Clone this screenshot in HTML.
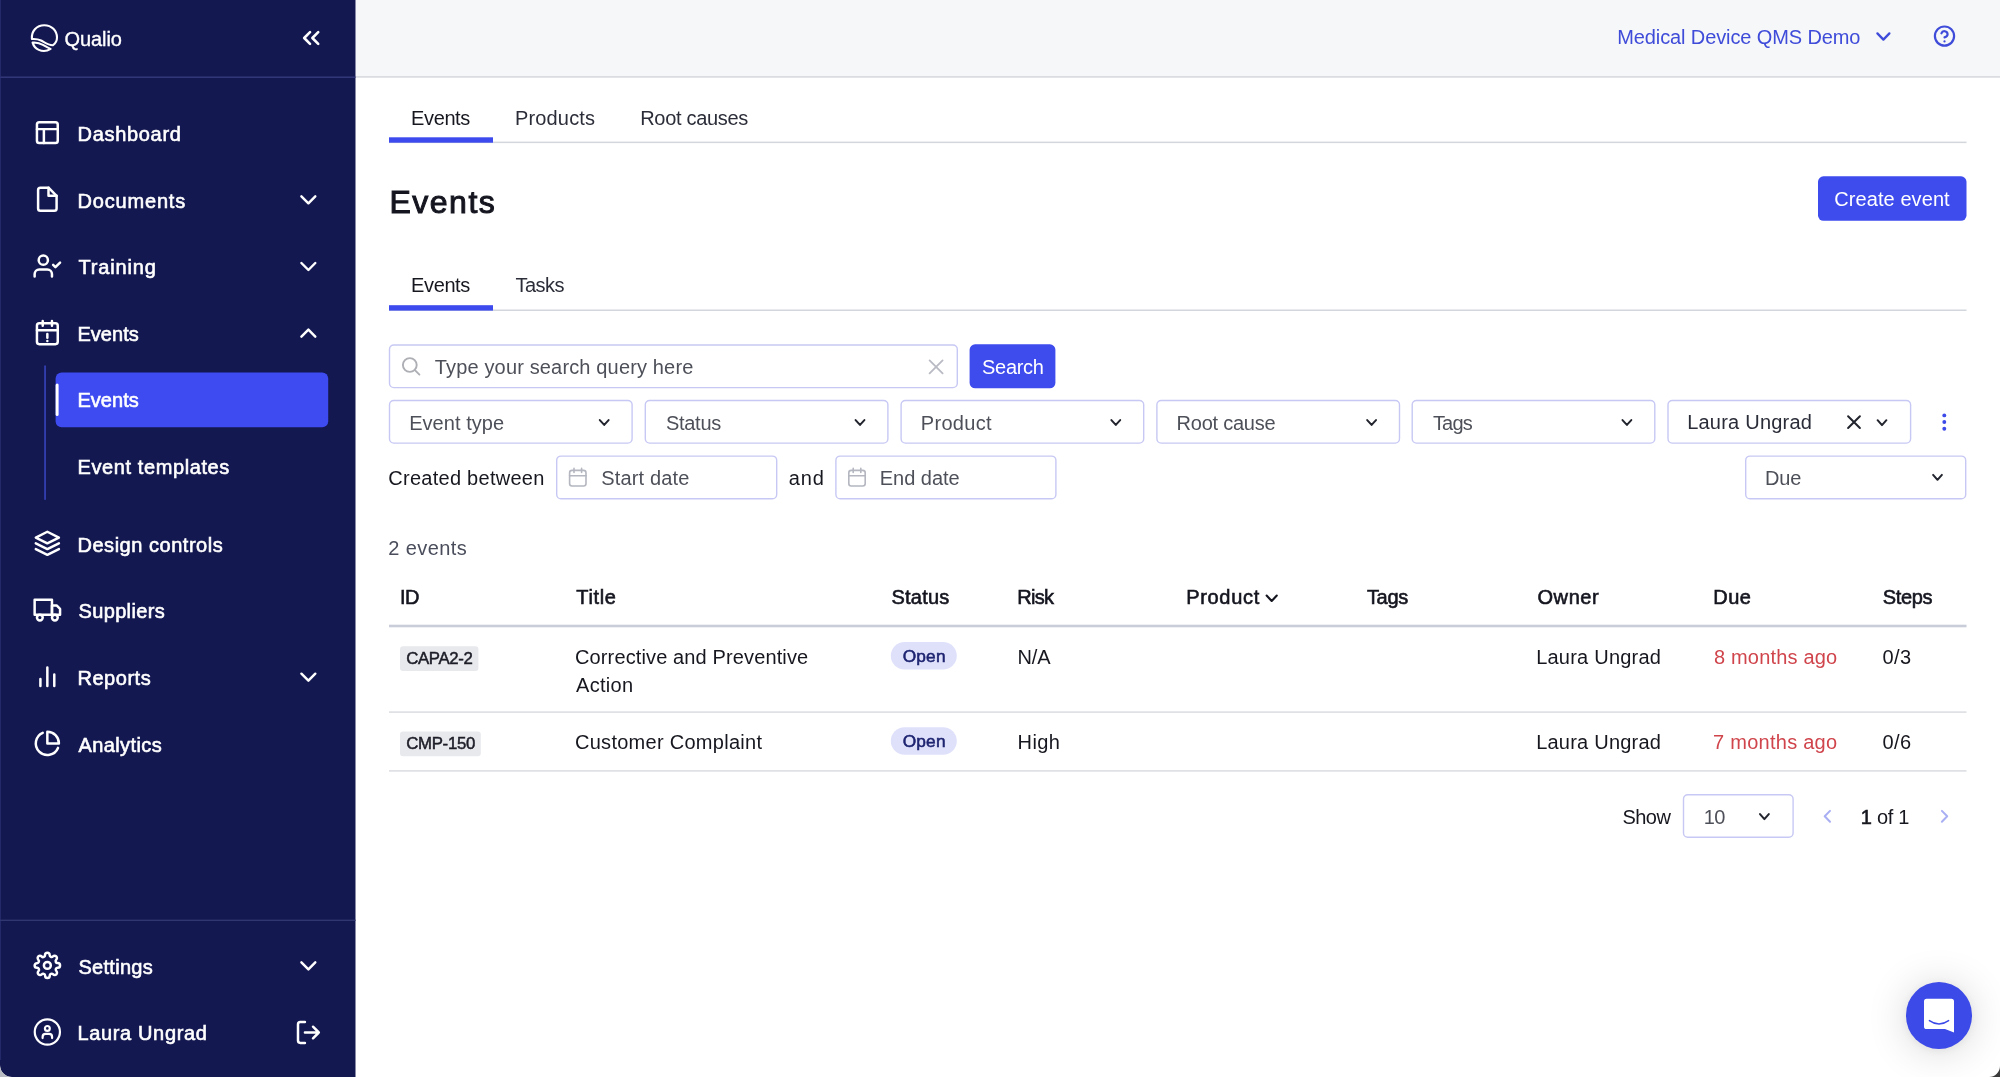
<!DOCTYPE html>
<html lang="en"><head><meta charset="utf-8"><title>Events - Qualio</title>
<style>
html,body{margin:0;padding:0}
body{width:2000px;height:1077px;overflow:hidden;position:relative;background:#fff;font-family:"Liberation Sans",sans-serif;-webkit-font-smoothing:antialiased}
.t{position:absolute;white-space:nowrap;line-height:1;margin:0;padding:0}
.tx{position:absolute;left:0;top:0;width:2000px;height:1077px;will-change:transform}
.b{position:absolute;box-sizing:border-box}
svg.ov{position:absolute;left:0;top:0;pointer-events:none}
</style></head><body>
<svg class="ov" width="2000" height="1077" viewBox="0 0 2000 1077">
<rect x="355.50" y="0.00" width="1644.50" height="77.40" fill="#f6f7f9"/>
<rect x="355.50" y="76.20" width="1644.50" height="1.40" fill="#d3d5db"/>
<path d="M0 0H355.5V1077H12A12 12 0 0 1 0 1065Z" fill="#141850"/>
<rect x="0.00" y="76.50" width="355.50" height="1.40" fill="#343a7c"/>
<rect x="0.00" y="0.00" width="0.70" height="1060.00" fill="#2c3274"/>
<rect x="0.00" y="919.60" width="355.50" height="1.40" fill="#30366f"/>
<rect x="55.60" y="372.40" width="272.60" height="54.80" rx="6" fill="#3d4bf1"/>
<rect x="55.60" y="383.50" width="3.00" height="32.50" rx="1.5" fill="#fff"/>
<rect x="44.30" y="365.50" width="1.50" height="134.30" fill="#3a47c4"/>
<rect x="389.00" y="141.60" width="1577.50" height="1.50" fill="#d4d6dd"/>
<rect x="389.00" y="137.30" width="104.00" height="5.40" fill="#3d4aed"/>
<rect x="389.00" y="309.50" width="1577.50" height="1.50" fill="#d4d6dd"/>
<rect x="389.00" y="305.20" width="104.00" height="5.40" fill="#3d4aed"/>
<rect x="1818.00" y="176.30" width="148.50" height="44.50" rx="5.5" fill="#3e4cee"/>
<rect x="389.50" y="345.00" width="567.80" height="42.60" rx="4.30" fill="#fff" stroke="#c7c8f4" stroke-width="1.4"/>
<rect x="969.60" y="344.30" width="85.80" height="44.00" rx="5.5" fill="#3e4cee"/>
<rect x="389.50" y="400.50" width="242.60" height="42.60" rx="4.30" fill="#fff" stroke="#c7c8f4" stroke-width="1.4"/>
<rect x="645.30" y="400.50" width="242.60" height="42.60" rx="4.30" fill="#fff" stroke="#c7c8f4" stroke-width="1.4"/>
<rect x="901.10" y="400.50" width="242.60" height="42.60" rx="4.30" fill="#fff" stroke="#c7c8f4" stroke-width="1.4"/>
<rect x="1156.90" y="400.50" width="242.60" height="42.60" rx="4.30" fill="#fff" stroke="#c7c8f4" stroke-width="1.4"/>
<rect x="1412.20" y="400.50" width="242.60" height="42.60" rx="4.30" fill="#fff" stroke="#c7c8f4" stroke-width="1.4"/>
<rect x="1668.00" y="400.50" width="242.60" height="42.60" rx="4.30" fill="#fff" stroke="#c7c8f4" stroke-width="1.4"/>
<rect x="556.70" y="456.10" width="220.00" height="42.60" rx="4.30" fill="#fff" stroke="#c7c8f4" stroke-width="1.4"/>
<rect x="835.90" y="456.10" width="220.00" height="42.60" rx="4.30" fill="#fff" stroke="#c7c8f4" stroke-width="1.4"/>
<rect x="1745.70" y="456.10" width="220.00" height="42.60" rx="4.30" fill="#fff" stroke="#c7c8f4" stroke-width="1.4"/>
<rect x="389.00" y="624.70" width="1577.50" height="2.60" fill="#c9ccd9"/>
<rect x="389.00" y="711.40" width="1577.50" height="1.40" fill="#d8dadf"/>
<rect x="389.00" y="770.20" width="1577.50" height="1.40" fill="#d8dadf"/>
<rect x="400.00" y="646.20" width="78.40" height="24.70" rx="3" fill="#e8e9ed"/>
<rect x="400.00" y="731.50" width="80.80" height="24.70" rx="3" fill="#e8e9ed"/>
<rect x="890.80" y="642.00" width="66.00" height="27.60" rx="13.8" fill="#dfe1fb"/>
<rect x="890.80" y="727.20" width="66.00" height="27.60" rx="13.8" fill="#dfe1fb"/>
<rect x="1683.50" y="794.70" width="109.60" height="42.60" rx="4.30" fill="#fff" stroke="#c7c8f4" stroke-width="1.4"/>
</svg>
<div class="b" style="left:1905.8px;top:982.3px;width:66.6px;height:66.6px;background:#3c4ae8;border-radius:50%;box-shadow:0 1.3px 8px rgba(0,0,0,.06),0 2.7px 42px rgba(0,0,0,.16)"></div>
<div class="tx">
<span class="t" style="left:64.58px;top:28.67px;font-size:20px;-webkit-text-stroke:0.35px #fff;color:#fff;letter-spacing:-0.088px;">Qualio</span>
<span class="t" style="left:77.50px;top:123.87px;font-size:20px;-webkit-text-stroke:0.6px #fff;color:#fff;letter-spacing:0.698px;">Dashboard</span>
<span class="t" style="left:77.50px;top:190.57px;font-size:20px;-webkit-text-stroke:0.6px #fff;color:#fff;letter-spacing:0.818px;">Documents</span>
<span class="t" style="left:78.50px;top:257.27px;font-size:20px;-webkit-text-stroke:0.6px #fff;color:#fff;letter-spacing:0.830px;">Training</span>
<span class="t" style="left:77.50px;top:323.87px;font-size:20px;-webkit-text-stroke:0.6px #fff;color:#fff;letter-spacing:0.011px;">Events</span>
<span class="t" style="left:77.50px;top:390.37px;font-size:20px;-webkit-text-stroke:0.6px #fff;color:#fff;letter-spacing:0.011px;">Events</span>
<span class="t" style="left:77.50px;top:457.27px;font-size:20px;-webkit-text-stroke:0.6px #fff;color:#fff;letter-spacing:0.599px;">Event templates</span>
<span class="t" style="left:77.50px;top:534.57px;font-size:20px;-webkit-text-stroke:0.6px #fff;color:#fff;letter-spacing:0.526px;">Design controls</span>
<span class="t" style="left:78.50px;top:601.37px;font-size:20px;-webkit-text-stroke:0.6px #fff;color:#fff;letter-spacing:0.353px;">Suppliers</span>
<span class="t" style="left:77.50px;top:667.97px;font-size:20px;-webkit-text-stroke:0.6px #fff;color:#fff;letter-spacing:0.528px;">Reports</span>
<span class="t" style="left:78.50px;top:734.67px;font-size:20px;-webkit-text-stroke:0.6px #fff;color:#fff;letter-spacing:0.396px;">Analytics</span>
<span class="t" style="left:78.50px;top:956.67px;font-size:20px;-webkit-text-stroke:0.6px #fff;color:#fff;letter-spacing:0.276px;">Settings</span>
<span class="t" style="left:77.50px;top:1023.37px;font-size:20px;-webkit-text-stroke:0.6px #fff;color:#fff;letter-spacing:0.638px;">Laura Ungrad</span>
<span class="t" style="left:1617.30px;top:27.07px;font-size:20px;color:#3f4cd9;letter-spacing:-0.114px;">Medical Device QMS Demo</span>
<span class="t" style="left:411.10px;top:107.67px;font-size:20px;color:#16171f;letter-spacing:-0.389px;">Events</span>
<span class="t" style="left:515.00px;top:107.67px;font-size:20px;color:#2b2d38;letter-spacing:0.153px;">Products</span>
<span class="t" style="left:640.20px;top:107.67px;font-size:20px;color:#2b2d38;letter-spacing:-0.307px;">Root causes</span>
<span class="t" style="left:389.50px;top:186.31px;font-size:32px;-webkit-text-stroke:1.0px #14151f;color:#14151f;letter-spacing:1.494px;">Events</span>
<span class="t" style="left:1834.30px;top:189.07px;font-size:20px;color:#fff;letter-spacing:0.077px;">Create event</span>
<span class="t" style="left:411.10px;top:275.27px;font-size:20px;color:#16171f;letter-spacing:-0.389px;">Events</span>
<span class="t" style="left:515.40px;top:275.27px;font-size:20px;color:#2b2d38;letter-spacing:-0.506px;">Tasks</span>
<span class="t" style="left:434.80px;top:356.97px;font-size:20px;color:#4e5059;letter-spacing:0.152px;">Type your search query here</span>
<span class="t" style="left:982.00px;top:356.77px;font-size:20px;color:#fff;letter-spacing:-0.289px;">Search</span>
<span class="t" style="left:409.20px;top:412.57px;font-size:20px;color:#4e5059;letter-spacing:0.047px;">Event type</span>
<span class="t" style="left:666.00px;top:412.57px;font-size:20px;color:#4e5059;letter-spacing:-0.300px;">Status</span>
<span class="t" style="left:920.80px;top:412.57px;font-size:20px;color:#4e5059;letter-spacing:0.305px;">Product</span>
<span class="t" style="left:1176.60px;top:412.57px;font-size:20px;color:#4e5059;letter-spacing:-0.250px;">Root cause</span>
<span class="t" style="left:1432.90px;top:412.57px;font-size:20px;color:#4e5059;letter-spacing:-0.782px;">Tags</span>
<span class="t" style="left:1687.20px;top:412.47px;font-size:20px;color:#2a2c38;letter-spacing:0.220px;">Laura Ungrad</span>
<span class="t" style="left:388.30px;top:467.67px;font-size:20px;color:#16171f;letter-spacing:0.264px;">Created between</span>
<span class="t" style="left:601.20px;top:467.67px;font-size:20px;color:#4e5059;letter-spacing:0.156px;">Start date</span>
<span class="t" style="left:788.80px;top:467.67px;font-size:20px;color:#16171f;letter-spacing:0.877px;">and</span>
<span class="t" style="left:879.80px;top:467.67px;font-size:20px;color:#4e5059;letter-spacing:-0.021px;">End date</span>
<span class="t" style="left:1765.00px;top:467.67px;font-size:20px;color:#4e5059;letter-spacing:-0.133px;">Due</span>
<span class="t" style="left:388.30px;top:538.27px;font-size:20px;color:#4a4d5b;letter-spacing:0.414px;">2 events</span>
<span class="t" style="left:400.10px;top:587.07px;font-size:20px;-webkit-text-stroke:0.6px #14151f;color:#14151f;letter-spacing:-0.757px;">ID</span>
<span class="t" style="left:576.30px;top:587.07px;font-size:20px;-webkit-text-stroke:0.6px #14151f;color:#14151f;letter-spacing:0.621px;">Title</span>
<span class="t" style="left:891.50px;top:587.07px;font-size:20px;-webkit-text-stroke:0.6px #14151f;color:#14151f;letter-spacing:0.220px;">Status</span>
<span class="t" style="left:1017.30px;top:587.07px;font-size:20px;-webkit-text-stroke:0.6px #14151f;color:#14151f;letter-spacing:-0.762px;">Risk</span>
<span class="t" style="left:1186.20px;top:587.07px;font-size:20px;-webkit-text-stroke:0.6px #14151f;color:#14151f;letter-spacing:0.688px;">Product</span>
<span class="t" style="left:1366.90px;top:587.07px;font-size:20px;-webkit-text-stroke:0.6px #14151f;color:#14151f;letter-spacing:-0.282px;">Tags</span>
<span class="t" style="left:1537.50px;top:587.07px;font-size:20px;-webkit-text-stroke:0.6px #14151f;color:#14151f;letter-spacing:0.563px;">Owner</span>
<span class="t" style="left:1713.30px;top:587.07px;font-size:20px;-webkit-text-stroke:0.6px #14151f;color:#14151f;letter-spacing:0.417px;">Due</span>
<span class="t" style="left:1882.70px;top:587.07px;font-size:20px;-webkit-text-stroke:0.6px #14151f;color:#14151f;letter-spacing:-0.336px;">Steps</span>
<span class="t" style="left:406.25px;top:651.18px;font-size:16.8px;-webkit-text-stroke:0.5px #1c1d27;color:#1c1d27;letter-spacing:-0.345px;">CAPA2-2</span>
<span class="t" style="left:575.00px;top:646.97px;font-size:20px;color:#16171f;letter-spacing:0.126px;">Corrective and Preventive</span>
<span class="t" style="left:576.00px;top:674.87px;font-size:20px;color:#16171f;letter-spacing:0.307px;">Action</span>
<span class="t" style="left:902.67px;top:647.76px;font-size:17.3px;-webkit-text-stroke:0.55px #1e2470;color:#1e2470;letter-spacing:0.195px;">Open</span>
<span class="t" style="left:1017.60px;top:646.97px;font-size:20px;color:#16171f;letter-spacing:-0.200px;">N/A</span>
<span class="t" style="left:1536.20px;top:646.97px;font-size:20px;color:#16171f;letter-spacing:0.220px;">Laura Ungrad</span>
<span class="t" style="left:1714.00px;top:646.97px;font-size:20px;color:#d0454c;letter-spacing:0.176px;">8 months ago</span>
<span class="t" style="left:1882.40px;top:646.97px;font-size:20px;color:#16171f;letter-spacing:0.460px;">0/3</span>
<span class="t" style="left:406.25px;top:736.48px;font-size:16.8px;-webkit-text-stroke:0.5px #1c1d27;color:#1c1d27;letter-spacing:-0.307px;">CMP-150</span>
<span class="t" style="left:575.00px;top:732.37px;font-size:20px;color:#16171f;letter-spacing:0.275px;">Customer Complaint</span>
<span class="t" style="left:902.67px;top:733.16px;font-size:17.3px;-webkit-text-stroke:0.55px #1e2470;color:#1e2470;letter-spacing:0.195px;">Open</span>
<span class="t" style="left:1017.60px;top:732.37px;font-size:20px;color:#16171f;letter-spacing:0.397px;">High</span>
<span class="t" style="left:1536.20px;top:732.37px;font-size:20px;color:#16171f;letter-spacing:0.220px;">Laura Ungrad</span>
<span class="t" style="left:1713.00px;top:732.37px;font-size:20px;color:#d0454c;letter-spacing:0.267px;">7 months ago</span>
<span class="t" style="left:1882.40px;top:732.37px;font-size:20px;color:#16171f;letter-spacing:0.460px;">0/6</span>
<span class="t" style="left:1622.40px;top:807.07px;font-size:20px;color:#16171f;letter-spacing:-0.495px;">Show</span>
<span class="t" style="left:1703.70px;top:807.07px;font-size:20px;color:#4e5059;letter-spacing:-0.523px;">10</span>
<span class="t" style="left:1860.70px;top:807.07px;font-size:20px;-webkit-text-stroke:0.6px #16171f;color:#16171f;">1</span>
<span class="t" style="left:1877.00px;top:807.07px;font-size:20px;color:#16171f;letter-spacing:-0.312px;">of 1</span>
</div>
<svg class="ov" width="2000" height="1077" viewBox="0 0 2000 1077">
<g fill="none" stroke="#fff" stroke-width="2.1" stroke-linecap="round" stroke-linejoin="round"><path d="M31.9 39C31.2 31.3 36.4 25.2 44.3 25.2C51.7 25.2 57 30.8 57 37.6C57 40.6 55.6 43.4 53 45.2C49 45.6 45 42.6 41 40.5C38 39 34.8 38.8 31.9 39Z"/><path d="M32.6 42.6C36 42.3 40 43.2 43.5 45.2C46 46.6 48.5 48.2 50.6 48.9C47.5 50.9 42.5 51.5 38.8 49.9C35.7 48.5 33.5 45.8 32.6 42.6Z"/></g>
<g transform="translate(33.48 118.73) scale(1.1556)" fill="none" stroke="#fff" stroke-width="2.15" stroke-linecap="round" stroke-linejoin="round"><rect x="3" y="3" width="18" height="18" rx="2"/><path d="M3 9H21M9 21V9"/></g>
<g transform="translate(33.48 185.43) scale(1.1556)" fill="none" stroke="#fff" stroke-width="2.15" stroke-linecap="round" stroke-linejoin="round"><path d="M13 2H6a2 2 0 0 0-2 2v16a2 2 0 0 0 2 2h12a2 2 0 0 0 2-2V9z"/><path d="M13 2V9H20"/></g>
<g transform="translate(33.48 252.13) scale(1.1556)" fill="none" stroke="#fff" stroke-width="2.15" stroke-linecap="round" stroke-linejoin="round"><path d="M16 21v-2a4 4 0 0 0-4-4H5a4 4 0 0 0-4 4v2"/><circle cx="8.5" cy="7" r="4"/><path d="M17 11l2 2l4-4"/></g>
<g transform="translate(33.48 318.73) scale(1.1556)" fill="none" stroke="#fff" stroke-width="2.15" stroke-linecap="round" stroke-linejoin="round"><rect x="3" y="4" width="18" height="18" rx="2"/><path d="M16 2V6M8 2V6M3 10H21M12 13.2V16.4M12 19.2V19.3"/></g>
<g transform="translate(33.48 529.43) scale(1.1556)" fill="none" stroke="#fff" stroke-width="2.15" stroke-linecap="round" stroke-linejoin="round"><path d="M12 2L2 7L12 12L22 7Z"/><path d="M2 17L12 22L22 17"/><path d="M2 12L12 17L22 12"/></g>
<g transform="translate(33.48 596.23) scale(1.1556)" fill="none" stroke="#fff" stroke-width="2.15" stroke-linecap="round" stroke-linejoin="round"><rect x="1" y="3" width="15" height="13"/><path d="M16 8H20L23 11V16H16Z"/><circle cx="5.5" cy="18.5" r="2.5"/><circle cx="18.5" cy="18.5" r="2.5"/></g>
<g transform="translate(33.48 662.83) scale(1.1556)" fill="none" stroke="#fff" stroke-width="2.15" stroke-linecap="round" stroke-linejoin="round"><path d="M18 20V10M12 20V4M6 20V14"/></g>
<g transform="translate(33.48 729.53) scale(1.1556)" fill="none" stroke="#fff" stroke-width="2.15" stroke-linecap="round" stroke-linejoin="round"><path d="M21.21 15.89A10 10 0 1 1 8 2.83"/><path d="M22 12A10 10 0 0 0 12 2v10z"/></g>
<g transform="translate(33.48 951.53) scale(1.1556)" fill="none" stroke="#fff" stroke-width="2.15" stroke-linecap="round" stroke-linejoin="round"><circle cx="12" cy="12" r="3"/><path d="M19.4 15a1.65 1.65 0 0 0 .33 1.82l.06.06a2 2 0 0 1 0 2.83 2 2 0 0 1-2.83 0l-.06-.06a1.65 1.65 0 0 0-1.82-.33 1.65 1.65 0 0 0-1 1.51V21a2 2 0 0 1-2 2 2 2 0 0 1-2-2v-.09A1.65 1.65 0 0 0 9 19.4a1.65 1.65 0 0 0-1.82.33l-.06.06a2 2 0 0 1-2.83 0 2 2 0 0 1 0-2.83l.06-.06a1.65 1.65 0 0 0 .33-1.82 1.65 1.65 0 0 0-1.51-1H3a2 2 0 0 1-2-2 2 2 0 0 1 2-2h.09A1.65 1.65 0 0 0 4.6 9a1.65 1.65 0 0 0-.33-1.82l-.06-.06a2 2 0 0 1 0-2.83 2 2 0 0 1 2.83 0l.06.06a1.65 1.65 0 0 0 1.82.33H9a1.65 1.65 0 0 0 1-1.51V3a2 2 0 0 1 2-2 2 2 0 0 1 2 2v.09a1.65 1.65 0 0 0 1 1.51 1.65 1.65 0 0 0 1.82-.33l.06-.06a2 2 0 0 1 2.83 0 2 2 0 0 1 0 2.83l-.06.06a1.65 1.65 0 0 0-.33 1.82V9a1.65 1.65 0 0 0 1.51 1H21a2 2 0 0 1 2 2 2 2 0 0 1-2 2h-.09a1.65 1.65 0 0 0-1.51 1z"/></g>
<g transform="translate(33.48 1018.13) scale(1.1556)" fill="none" stroke="#fff" stroke-width="1.9" stroke-linecap="round" stroke-linejoin="round"><circle cx="12" cy="12" r="10.9"/><circle cx="12" cy="8.9" r="2.1"/><path d="M7.9 17.3v-1a2.6 2.6 0 0 1 2.6-2.6h3a2.6 2.6 0 0 1 2.6 2.6v1"/></g>
<g transform="translate(294.53 1018.63) scale(1.1556)" fill="none" stroke="#fff" stroke-width="2.15" stroke-linecap="round" stroke-linejoin="round"><path d="M9 21H5a2 2 0 0 1-2-2V5a2 2 0 0 1 2-2h4"/><path d="M16 17L21 12L16 7M21 12H9"/></g>
<g transform="translate(297.16 23.96) scale(1.17)" fill="none" stroke="#fff" stroke-width="2.2" stroke-linecap="round" stroke-linejoin="round"><path d="M11 17L6 12L11 7M18 17L13 12L18 7"/></g>
<path d="M301.4 196.3L308.4 203.3L315.3 196.3" fill="none" stroke="#fff" stroke-width="2.45" stroke-linecap="round" stroke-linejoin="round"/>
<path d="M301.4 263.0L308.4 270.0L315.3 263.0" fill="none" stroke="#fff" stroke-width="2.45" stroke-linecap="round" stroke-linejoin="round"/>
<path d="M301.4 673.7L308.4 680.7L315.3 673.7" fill="none" stroke="#fff" stroke-width="2.45" stroke-linecap="round" stroke-linejoin="round"/>
<path d="M301.4 962.4L308.4 969.4L315.3 962.4" fill="none" stroke="#fff" stroke-width="2.45" stroke-linecap="round" stroke-linejoin="round"/>
<path d="M301.4 336.6L308.4 329.6L315.3 336.6" fill="none" stroke="#fff" stroke-width="2.45" stroke-linecap="round" stroke-linejoin="round"/>
<path d="M1877.4 33.4L1883.4 39.6L1889.4 33.4" fill="none" stroke="#3f4cd9" stroke-width="2.3" stroke-linecap="round" stroke-linejoin="round"/>
<g fill="none" stroke="#3f4cd9" stroke-width="2.2" stroke-linecap="round" stroke-linejoin="round"><circle cx="1944.5" cy="36.1" r="9.6"/><path d="M1941.4 33.3a3.2 3.2 0 0 1 6.2 1c0 2.1-3.1 3.1-3.1 3.1"/><path d="M1944.5 41.3V41.4"/></g>
<g fill="none" stroke="#adafb5" stroke-width="1.9" stroke-linecap="round"><circle cx="409.8" cy="365" r="6.9"/><path d="M414.9 370.1L419.4 374.6"/></g>
<path d="M929.6 360.4L942.6 373.4M942.6 360.4L929.6 373.4" fill="none" stroke="#b9bbc4" stroke-width="1.8" stroke-linecap="round"/>
<path d="M599.8 420.1L604.2 424.9L608.6 420.1" fill="none" stroke="#22242e" stroke-width="2" stroke-linecap="round" stroke-linejoin="round"/>
<path d="M855.6 420.1L860.0 424.9L864.4 420.1" fill="none" stroke="#22242e" stroke-width="2" stroke-linecap="round" stroke-linejoin="round"/>
<path d="M1111.4 420.1L1115.8 424.9L1120.2 420.1" fill="none" stroke="#22242e" stroke-width="2" stroke-linecap="round" stroke-linejoin="round"/>
<path d="M1367.2 420.1L1371.6 424.9L1376.0 420.1" fill="none" stroke="#22242e" stroke-width="2" stroke-linecap="round" stroke-linejoin="round"/>
<path d="M1622.5 420.1L1626.9 424.9L1631.3 420.1" fill="none" stroke="#22242e" stroke-width="2" stroke-linecap="round" stroke-linejoin="round"/>
<path d="M1877.6 420.2L1882.0 425.1L1886.4 420.2" fill="none" stroke="#22242e" stroke-width="2" stroke-linecap="round" stroke-linejoin="round"/>
<path d="M1848.1 416.2L1859.9 428M1859.9 416.2L1848.1 428" fill="none" stroke="#22242e" stroke-width="2" stroke-linecap="round"/>
<circle cx="1944.3" cy="415.4" r="1.95" fill="#3c4ae8"/>
<circle cx="1944.3" cy="422" r="1.95" fill="#3c4ae8"/>
<circle cx="1944.3" cy="428.7" r="1.95" fill="#3c4ae8"/>
<g fill="none" stroke="#b4b6c0" stroke-width="1.6" stroke-linecap="round" stroke-linejoin="round"><rect x="569.6" y="470.4" width="16.4" height="15.6" rx="2.4"/><path d="M569.6 475.79999999999995H586.0M574.0 468.4V472.4M581.6 468.4V472.4"/></g>
<g fill="none" stroke="#b4b6c0" stroke-width="1.6" stroke-linecap="round" stroke-linejoin="round"><rect x="848.8" y="470.4" width="16.4" height="15.6" rx="2.4"/><path d="M848.8 475.79999999999995H865.1999999999999M853.1999999999999 468.4V472.4M860.8 468.4V472.4"/></g>
<path d="M1933.1 474.9L1937.5 479.8L1941.9 474.9" fill="none" stroke="#22242e" stroke-width="2" stroke-linecap="round" stroke-linejoin="round"/>
<path d="M1266.6 595.5L1271.7 601.0L1276.8 595.5" fill="none" stroke="#14151f" stroke-width="2.1" stroke-linecap="round" stroke-linejoin="round"/>
<path d="M1760.0 814.1L1764.4 819.1L1768.8 814.1" fill="none" stroke="#22242e" stroke-width="2" stroke-linecap="round" stroke-linejoin="round"/>
<path d="M1830 810.9L1824.7 816.3L1830 821.7" fill="none" stroke="#a9aff3" stroke-width="2" stroke-linecap="round" stroke-linejoin="round"/>
<path d="M1941.9 810.9L1947.2 816.3L1941.9 821.7" fill="none" stroke="#a9aff3" stroke-width="2" stroke-linecap="round" stroke-linejoin="round"/>
<path d="M1926.6 998.8H1951.4a2.6 2.6 0 0 1 2.6 2.6V1032.6L1945 1029H1926.6a2.6 2.6 0 0 1-2.6-2.6V1001.4a2.6 2.6 0 0 1 2.6-2.6Z" fill="#fff"/><path d="M1929.4 1020.6Q1939 1027.4 1948.6 1020.6" fill="none" stroke="#3c4ae8" stroke-width="1.5" stroke-linecap="round"/>
<path d="M0 1077V1065A12 12 0 0 0 12 1077Z" fill="#b9bcc2"/>
<path d="M2000 1077V1066A11 11 0 0 1 1989 1077Z" fill="#3c3c3c"/>
</svg>
</body></html>
